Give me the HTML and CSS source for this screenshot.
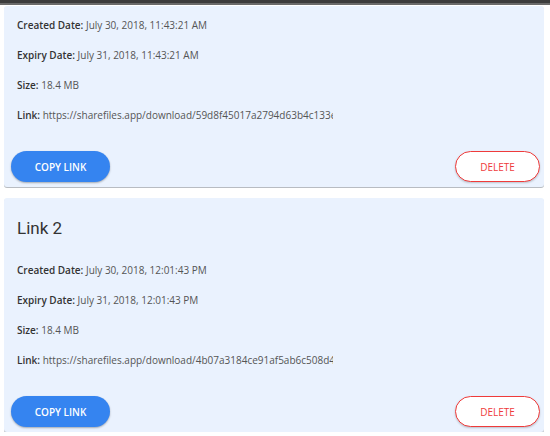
FILE: index.html
```html
<!DOCTYPE html>
<html>
<head>
<meta charset="utf-8">
<link rel="stylesheet" href="styles.css">
</head>
<body>
<div class="topbar"></div>
<div class="list">
  <div class="card">
    <div class="content">
      <p class="row"><b>Created Date:</b> July 30, 2018, 11:43:21 AM</p>
      <p class="row"><b>Expiry Date:</b> July 31, 2018, 11:43:21 AM</p>
      <p class="row"><b>Size:</b> 18.4 MB</p>
      <p class="row link"><b>Link:</b> https://sharefiles.app/download/59d8f45017a2794d63b4c133e8a1f0c2</p>
    </div>
    <div class="actions">
      <button class="btn copy">Copy Link</button>
      <button class="btn delete">Delete</button>
    </div>
  </div>
  <div class="card">
    <div class="content">
      <h2 class="title">Link 2</h2>
      <p class="row"><b>Created Date:</b> July 30, 2018, 12:01:43 PM</p>
      <p class="row"><b>Expiry Date:</b> July 31, 2018, 12:01:43 PM</p>
      <p class="row"><b>Size:</b> 18.4 MB</p>
      <p class="row link"><b>Link:</b> https://sharefiles.app/download/4b07a3184ce91af5ab6c508d4e2f19a7</p>
    </div>
    <div class="actions">
      <button class="btn copy">Copy Link</button>
      <button class="btn delete">Delete</button>
    </div>
  </div>
</div>
</body>
</html>
```

FILE: styles.css
```css
html, body {
  margin: 0;
  padding: 0;
  background: #ffffff;
  overflow: hidden;
}
body {
  font-family: "Open Sans", "Liberation Sans", sans-serif;
}
.topbar {
  height: 3px;
  background: #3c3c3c;
  border-bottom: 2px solid #6a6a6a;
}
.list {
  display: flex;
  flex-direction: column;
  gap: 11px;
  padding: 1px 6px 0 4px;
}
.card {
  background: #eaf2fe;
  border-radius: 3px;
  box-shadow: 0 1px 0 #b8bcc2;
}
.content {
  padding: 12px 0 0 13px;
}
.title {
  margin: 8px 0 25px;
  font-family: Roboto, "Liberation Sans", sans-serif;
  font-weight: 400;
  font-size: 17px;
  line-height: 20px;
  color: #333333;
}
.row {
  margin: 0 0 16px;
  font-size: 10px;
  line-height: 14px;
  color: #555555;
}
.row b {
  font-weight: 600;
  color: #333333;
}
.row.link {
  width: 316px;
  white-space: nowrap;
  overflow: hidden;
}
.actions {
  display: flex;
  justify-content: space-between;
  align-items: center;
  padding: 13px 4px 5px 7px;
}
.btn {
  height: 31px;
  border-radius: 16px;
  font-family: "Open Sans", "Liberation Sans", sans-serif;
  font-size: 10px;
  font-weight: 600;
  text-transform: uppercase;
  cursor: pointer;
  padding: 0;
}
.copy {
  width: 99px;
  background: #3584f0;
  color: #ffffff;
  border: none;
  box-shadow: 0 1px 2px rgba(0, 0, 0, 0.3);
}
.delete {
  width: 85px;
  background: #ffffff;
  color: #ef3b3b;
  border: 1px solid #ef3b3b;
  font-weight: 400;
  box-shadow: 0 1px 2px rgba(0, 0, 0, 0.2);
}
```
